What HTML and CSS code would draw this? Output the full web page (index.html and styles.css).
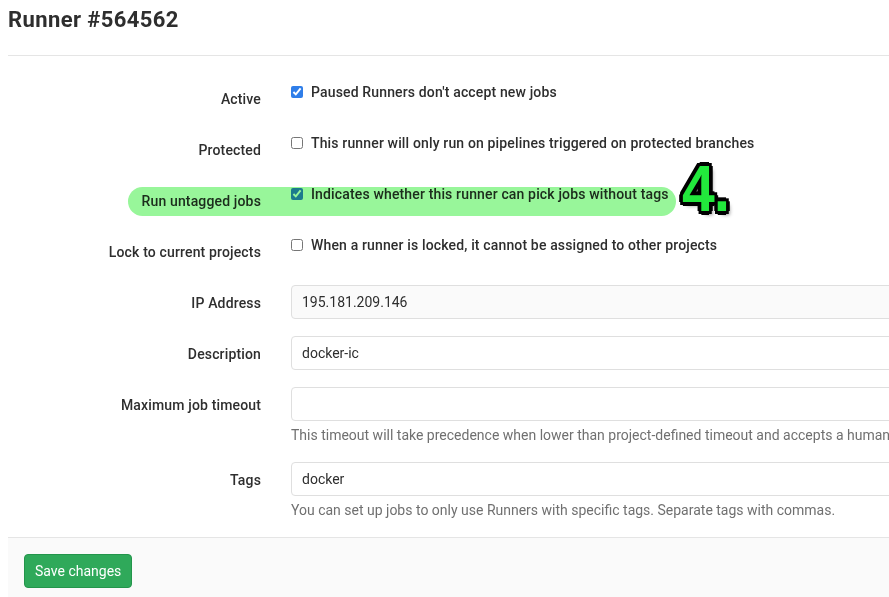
FILE: index.html
```html
<!DOCTYPE html>
<html lang="en">
<head>
    <meta charset="UTF-8">
    <meta name="viewport" content="width=device-width, initial-scale=1.0">
    <title>Runner #564562</title>
    <link rel="stylesheet" href="styles.css">
</head>
<body>

    <div class="page">
        <div class="page-header">
            <h3 class="page-title">Runner #564562</h3>
        </div>

        <form class="runner-form">
            <div class="form-group">
                <label class="col-label">Active</label>
                <div class="col-control">
                    <label class="check"><input type="checkbox" checked> Paused Runners don't accept new jobs</label>
                </div>
            </div>
            <div class="form-group">
                <label class="col-label">Protected</label>
                <div class="col-control">
                    <label class="check"><input type="checkbox"> This runner will only run on pipelines triggered on protected branches</label>
                </div>
            </div>
            <div class="form-group">
                <label class="col-label">Run untagged jobs</label>
                <div class="col-control">
                    <label class="check"><input type="checkbox" checked> Indicates whether this runner can pick jobs without tags</label>
                </div>
            </div>
            <div class="form-group">
                <label class="col-label">Lock to current projects</label>
                <div class="col-control">
                    <label class="check"><input type="checkbox"> When a runner is locked, it cannot be assigned to other projects</label>
                </div>
            </div>
            <div class="form-group field">
                <label class="col-label">IP Address</label>
                <div class="col-control">
                    <input class="text-input" type="text" value="195.181.209.146" readonly>
                </div>
            </div>
            <div class="form-group field">
                <label class="col-label">Description</label>
                <div class="col-control">
                    <input class="text-input" type="text" value="docker-ic">
                </div>
            </div>
            <div class="form-group field">
                <label class="col-label">Maximum job timeout</label>
                <div class="col-control">
                    <input class="text-input" type="text" value="">
                    <p class="help">This timeout will take precedence when lower than project-defined timeout and accepts a human readable time input language like "1 hour".</p>
                </div>
            </div>
            <div class="form-group field">
                <label class="col-label">Tags</label>
                <div class="col-control">
                    <input class="text-input" type="text" value="docker">
                    <p class="help">You can set up jobs to only use Runners with specific tags. Separate tags with commas.</p>
                </div>
            </div>

            <div class="form-actions">
                <button type="button" class="btn-save">Save changes</button>
            </div>
        </form>

        <!-- annotation over the screenshot -->
        <div class="marker"></div>
        <div class="step-num">4.</div>
    </div>

</body>
</html>
```

FILE: styles.css
```css
html, body {
    overflow: hidden;
}
body {
    font-family: Roboto, "Liberation Sans", Arial, sans-serif;
    font-size: 14px;
    line-height: 20px;
    color: #2e2e2e;
    background: #ffffff;
    margin: 0;
}
.page {
    position: relative;
    width: 1200px;
    padding-left: 8px;
}
.page-header {
    padding-top: 7px;
    padding-bottom: 22px;
    border-bottom: 1px solid #e5e5e5;
}
.page-title {
    margin: 0;
    font-size: 22px;
    line-height: 26px;
    font-weight: bold;
    letter-spacing: 0.4px;
    color: #2e2e2e;
}
.runner-form {
    padding-top: 25px;
}
.form-group {
    display: grid;
    grid-template-columns: 253px 1fr;
    column-gap: 30px;
    margin-bottom: 17px;
}
.col-label {
    text-align: right;
    font-weight: 500;
    letter-spacing: 0.15px;
    padding-top: 8px;
    padding-bottom: 6px;
}
.check {
    display: flex;
    align-items: center;
    gap: 8px;
    padding-top: 1px;
    font-weight: 500;
    letter-spacing: 0.15px;
}
.check input {
    margin: 0;
    width: 12px;
    height: 12px;
    accent-color: #2f7ee9;
}
.text-input {
    display: block;
    box-sizing: border-box;
    width: 100%;
    height: 34px;
    padding: 0 10px;
    font-family: inherit;
    font-size: 14px;
    color: #2e2e2e;
    border: 1px solid #dfdfdf;
    border-radius: 4px;
    background: #fff;
}
.text-input[readonly] {
    background: #fafafa;
}
.help {
    margin: 4px 0 0;
    color: #707070;
}
.form-group:last-of-type {
    margin-bottom: 14px;
}
.form-actions {
    padding: 16px;
    background: #fafafa;
    border-top: 1px solid #e5e5e5;
    height: 60px;
}
.btn-save {
    height: 34px;
    padding: 0 10px;
    font-family: inherit;
    font-size: 14px;
    color: #fff;
    background: #2fa95a;
    border: 1px solid #23954b;
    border-radius: 4px;
    cursor: pointer;
}
.marker {
    position: absolute;
    left: 128px;
    top: 187px;
    width: 548px;
    height: 29px;
    border-radius: 15px;
    background: #98f69a;
    mix-blend-mode: multiply;
}
.step-num {
    position: absolute;
    left: 682px;
    top: 154px;
    font-family: "Liberation Sans", Arial, sans-serif;
    font-weight: bold;
    font-size: 64px;
    line-height: 70px;
    color: #22e83c;
    letter-spacing: -1px;
    transform: scaleX(0.92);
    transform-origin: left top;
    text-shadow:
        4px 0 0 #000, -4px 0 0 #000, 0 4px 0 #000, 0 -4px 0 #000,
        3px 3px 0 #000, -3px -3px 0 #000, 3px -3px 0 #000, -3px 3px 0 #000,
        4px 4px 4px rgba(0, 0, 0, 0.4);
}
```
